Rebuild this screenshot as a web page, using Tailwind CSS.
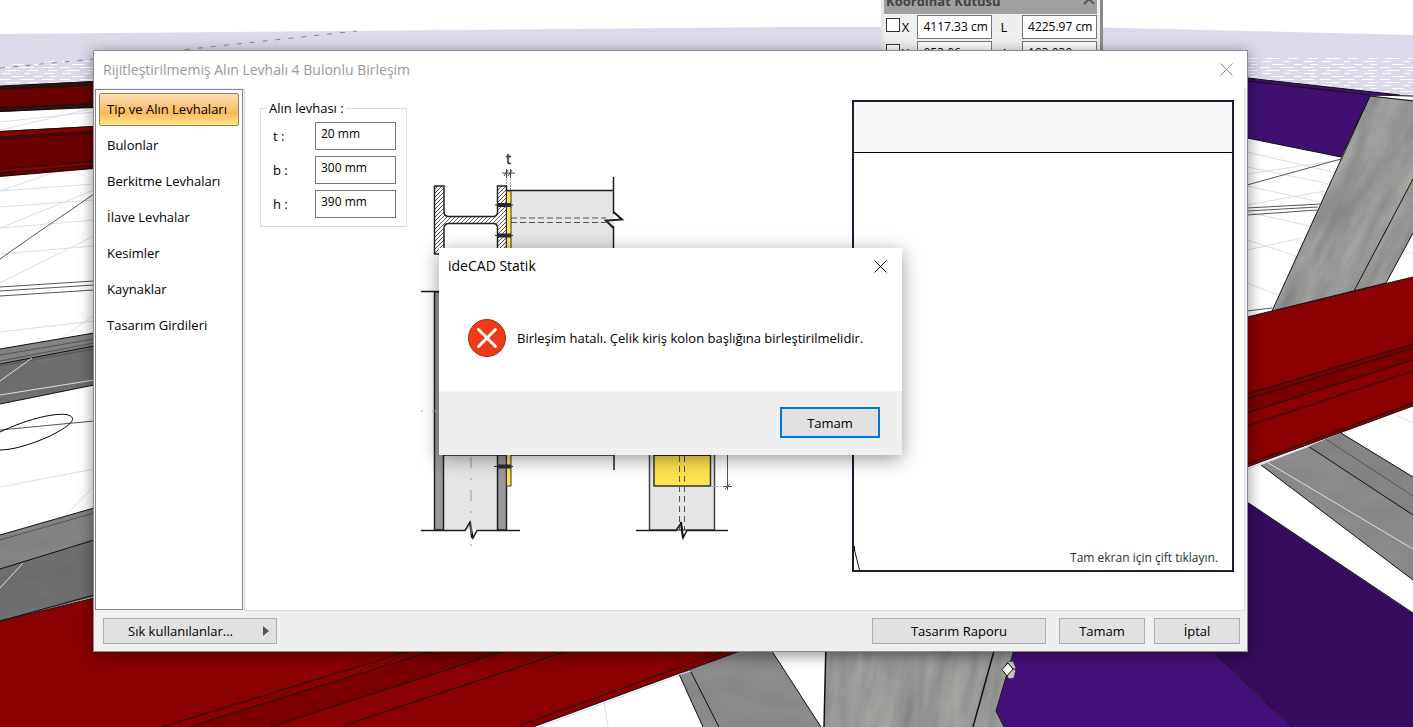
<!doctype html>
<html lang="tr">
  <head>
    <meta charset="UTF-8" />
    <meta name="viewport" content="width=device-width, initial-scale=1.0" />
    <title>ideCAD Statik</title>
    <script src="https://cdn.jsdelivr.net/npm/@tailwindcss/browser@4"></script>
  </head>
  <body
    class="relative h-screen overflow-hidden bg-white font-['Open_Sans','Noto_Sans',sans-serif] text-[13px] leading-4 text-black"
  >
    <!-- 3D viewport -->
    <svg
      class="absolute inset-0 h-full w-full"
      viewBox="0 0 1413 727"
      preserveAspectRatio="xMidYMid slice"
      aria-hidden="true"
    >
      <defs>
        <filter id="concrete" x="0" y="0" width="100%" height="100%" color-interpolation-filters="sRGB">
          <feTurbulence type="fractalNoise" baseFrequency="0.06 0.012" numOctaves="4" seed="8" />
          <feColorMatrix
            values="0.22 0 0 0 0.48  0.22 0 0 0 0.485  0.2 0 0 0 0.485  0 0 0 0 1"
          />
        </filter>
        <filter id="cement" x="0" y="0" width="100%" height="100%" color-interpolation-filters="sRGB">
          <feTurbulence type="fractalNoise" baseFrequency="0.02 0.06" numOctaves="3" seed="3" />
          <feColorMatrix
            values="0.05 0 0 0 0.49  0.05 0 0 0 0.49  0.05 0 0 0 0.49  0 0 0 0 1"
          />
        </filter>
        <pattern id="haze" width="60" height="12" patternUnits="userSpaceOnUse">
          <path
            d="M2 1.5h9M24 1.5h6M44 1.5h11M12 4.5h12M34 4.5h8M50 4.5h7M0 7.5h10M20 7.5h14M42 7.5h12M6 10.5h14M28 10.5h10M48 10.5h9"
            stroke="#fff"
          />
        </pattern>
        <clipPath id="columnTop">
          <path d="M1370 96L1413 100V233L1386 283L1272 311Z" />
        </clipPath>
        <clipPath id="columnBottom">
          <path d="M826 640H1017L1014 651L996 711L1004 727H824Z" />
        </clipPath>
        <clipPath id="cementParts">
          <path
            d="M0 349L94 333V385L0 404ZM0 535L94 508V597L0 621ZM1261 465L1341 433L1413 477V580ZM679 674L740 645H768L821 727H703Z"
          />
        </clipPath>
      </defs>

      <!-- ground and horizon -->
      <path d="M0 34L340 31L800 27H1080L1413 35V97L1247 80H94L0 86Z" fill="#dcdaea" />
      <path d="M0 64L94 59V82L0 86ZM1247 56L1413 58V97L1247 80Z" fill="url(#haze)" />
      <path d="M0 68L94 59M172 51L357 31" stroke="#888" stroke-dasharray="5 8" fill="none" />
      <g stroke="#dcdaea" fill="none">
        <path
          d="M0 191L94 184M0 207L94 200M0 228L94 190M0 191L55 172M0 228L94 220M0 254L94 246M0 283L94 236M0 332L94 321M62 338L94 315M0 487L94 469M65 516L94 486M0 122L94 112M0 130L94 108"
        />
        <path
          d="M1247 152L1341 174M1247 167L1330 184M1247 174L1341 160M1247 186L1320 202M1247 205L1325 191M1247 212L1310 226M1247 240L1296 256M1247 250L1302 238M1247 283L1278 295M1400 250L1413 254M1396 415L1413 423"
        />
        <path d="M540 727L691 671M604 702L608 727" />
      </g>
      <g stroke="#555" fill="none">
        <path d="M0 259L27 240L94 194M0 287L94 281M0 291L94 285M0 296L94 290M0 430L94 421" />
        <path
          d="M1247 185L1341 159M1247 208L1320 204M1247 211L1318 207M1247 215L1317 210M1247 311L1272 308"
        />
      </g>
      <path d="M0 432C25 420 52 413 66 414.500C78 417 74 424 50 436C30 445 12 450 0 450" stroke="#000" fill="none" />

      <!-- cement beams -->
      <g clip-path="url(#cementParts)">
        <rect width="1413" height="727" filter="url(#cement)" />
        <path d="M0 364L94 346V385L0 404ZM0 569L94 540V597L0 621Z" fill="#000" fill-opacity="0.16" />
        <path d="M1240 400L1413 515V600H1240ZM640 640H900V727H640Z" fill="#fff" fill-opacity="0.05" />
      </g>
      <g stroke="#111" fill="none">
        <path
          d="M0 349L94 333M0 364L94 346M0 404L94 385M0 535L94 508M0 569L94 540M0 621L94 595M1261 465L1413 580M1308 446L1413 515M1341 433L1413 477M679 674L703 727M690 670L719 727M768 645L821 727"
        />
        <path
          d="M0 355L94 339M0 361L94 343M0 366L94 349M0 540L94 513M1324 438L1413 496"
          stroke="#555"
        />
        <path
          d="M0 395L94 380M0 381L32 358M0 588L23 563M1265 461L1413 549M1247 469L1310 446M678 675L691 671"
          stroke="#dcdaea"
        />
      </g>

      <!-- steel beams -->
      <path d="M0 86L94 81V107L0 112Z" fill="#6b0000" />
      <path d="M0 131L94 126V169L0 177Z" fill="#6b0000" />
      <path d="M0 132L94 127V131L0 137ZM0 172L94 165V163L0 170Z" fill="#8b0000" />
      <path
        d="M0 86.500L94 82M0 89L94 85M0 108L94 104M0 111L94 107"
        stroke="#151515"
        stroke-width="2"
      />
      <path
        d="M0 131.500L94 126.500M0 137L94 131M0 139L94 133M0 169L94 161M0 173L94 165M0 176L94 168"
        stroke="#151515"
      />
      <path d="M0 621L94 598V640H770L533 727H0Z" fill="#8b0000" />
      <path d="M188 727L468 640H539L270 727Z" fill="#7a0000" />
      <path
        d="M0 621L94 598M162 727L445 640M188 727L468 640M270 727L539 640M340 727L600 640M516 727L755 640M533 727L770 640"
        stroke="#151515"
      />
      <path d="M1247 317L1413 277V406L1247 467Z" fill="#8b0000" />
      <path d="M1247 394L1413 344V360L1247 413Z" fill="#7a0000" />
      <path
        d="M1247 317L1413 277M1247 394L1413 344M1247 399L1413 348M1247 413L1413 360M1247 426L1413 371M1247 464L1413 403M1247 467L1413 406"
        stroke="#151515"
      />

      <!-- concrete columns -->
      <g clip-path="url(#columnTop)">
        <rect
          x="1200"
          y="0"
          width="300"
          height="420"
          filter="url(#concrete)"
          transform="rotate(27 1350 200)"
        />
      </g>
      <path
        d="M1370 96L1272 311M1413 179L1354 291M1413 233L1386 283M1370 96L1413 101M1370 95L1413 96M1272 311L1386 283"
        stroke="#111"
      />
      <g clip-path="url(#columnBottom)">
        <rect
          x="780"
          y="560"
          width="300"
          height="240"
          filter="url(#concrete)"
          transform="rotate(8 920 690)"
        />
      </g>
      <path d="M826 640L824 727M997 640L973 727" stroke="#111" stroke-width="1.500" />

      <!-- slabs -->
      <path d="M1247 78L1400 95L1370 96L1341 157L1247 138Z" fill="#3f1070" />
      <path d="M1247 78L1400 95M1247 81L1370 95M1247 138L1341 157L1370 96" stroke="#111" fill="none" />
      <path d="M1017 640L996 711L1004 727H1292L1201 640Z" fill="#43107a" />
      <path d="M1201 640H1247V502L1408 610L1413 613V727H1292Z" fill="#360c5e" />
      <path
        d="M1017 640L996 711L1004 727M1201 640L1292 727M1247 502L1413 613"
        stroke="#111"
        fill="none"
      />
      <path d="M1007 662L1013 661L1016 668L1014 678L1009 679L1004 671Z" fill="#c4c4c4" stroke="#111" stroke-width="0.500" />
      <path d="M1002 669.500L1008 663L1013 669L1007 676Z" fill="#fff" stroke="#111" />
      <path d="M1013 669H1016" stroke="#111" />
    </svg>

    <!-- coordinate box -->
    <section
      class="absolute -top-[9px] left-[881px] w-[222px] border-r-3 border-l-3 border-r-[#8a8a8a] border-l-[#e6e6e6] bg-[#efefef] pr-[3px]"
    >
      <header class="flex h-[23px] items-center justify-between bg-[#a0a0a0] px-[2px] pb-1 font-bold text-[#444]">
        <h2>Koordinat Kutusu</h2>
        <svg class="h-2 w-3" viewBox="0 0 12 8" aria-hidden="true">
          <path d="M1 7L6 2L11 7" fill="none" stroke="#555" stroke-width="2" />
        </svg>
      </header>
      <div class="flex flex-col gap-[2px] py-px">
        <div class="flex items-center">
          <input id="lockX" type="checkbox" class="mx-[2px] mb-1 h-[14px] w-[14px] appearance-none border border-[#333] bg-white" />
          <label for="lockX" class="w-4">X</label>
          <input aria-label="X" value="4117.33 cm" class="h-6 w-[75px] border border-[#777] bg-white pb-[2px] pl-[5px] text-[12px]" />
          <label for="coordL" class="w-[30px] pl-2">L</label>
          <input id="coordL" value="4225.97 cm" class="h-6 w-[75px] border border-[#777] bg-white pb-[2px] pl-[5px] text-[12px]" />
        </div>
        <div class="flex items-center">
          <input id="lockY" type="checkbox" class="mx-[2px] mb-1 h-[14px] w-[14px] appearance-none border border-[#333] bg-white" />
          <label for="lockY" class="w-4">Y</label>
          <input aria-label="Y" value="953.06 cm" class="h-6 w-[75px] border border-[#777] bg-white pb-[2px] pl-[5px] text-[12px]" />
          <label for="coordA" class="w-[30px] pl-2">A</label>
          <input id="coordA" value="193.039" class="h-6 w-[75px] border border-[#777] bg-white pb-[2px] pl-[5px] text-[12px]" />
        </div>
      </div>
    </section>

    <!-- connection dialog -->
    <main
      class="absolute top-[50px] right-[165px] bottom-[75px] left-[93px] flex flex-col border border-[#8a8a90] bg-[#efefef] shadow-[0_3px_14px_rgba(0,0,0,0.45)]"
    >
      <header class="flex h-[37px] shrink-0 items-center justify-between bg-white pr-[14px] pl-[9px]">
        <h1 class="text-[14px] text-[#999]">Rijitleştirilmemiş Alın Levhalı 4 Bulonlu Birleşim</h1>
        <button type="button" aria-label="Kapat">
          <svg class="h-[13px] w-[13px]" viewBox="0 0 13 13">
            <path d="M0.500 0.500L12.500 12.500M12.500 0.500L0.500 12.500" stroke="#888" />
          </svg>
        </button>
      </header>

      <div class="flex min-h-0 flex-1">
        <nav class="mt-px mr-px mb-px ml-px flex w-[148px] shrink-0 flex-col gap-[3px] border border-[#828790] bg-white p-[3px]">
          <button
            type="button"
            class="h-[33px] rounded-[2px] border border-[#a08050] bg-linear-to-b from-[#fcdcb4] via-[#fbb95c] via-60% to-[#ffe48c] pb-px pl-[7px] text-left"
          >
            Tip ve Alın Levhaları
          </button>
          <button type="button" class="h-[33px] pb-px pl-2 text-left">Bulonlar</button>
          <button type="button" class="h-[33px] pb-px pl-2 text-left">Berkitme Levhaları</button>
          <button type="button" class="h-[33px] pb-px pl-2 text-left">İlave Levhalar</button>
          <button type="button" class="h-[33px] pb-px pl-2 text-left">Kesimler</button>
          <button type="button" class="h-[33px] pb-px pl-2 text-left">Kaynaklar</button>
          <button type="button" class="h-[33px] pb-px pl-2 text-left">Tasarım Girdileri</button>
        </nav>

        <div class="mr-[2px] flex flex-1 items-start border-r border-b border-l border-[#dcdcdc] bg-white pt-3 pr-[10px] pb-[38px] pl-[15px]">
          <fieldset class="w-[147px] border border-[#dcdcdc] px-[10px] pb-2">
            <legend class="-ml-1 px-[2px]">Alın levhası :</legend>
            <div class="mt-[6px] flex flex-col gap-[6px]">
              <div class="flex items-center justify-between">
                <label for="plateT" class="pl-[2px]">t :</label>
                <input id="plateT" value="20 mm" class="h-7 w-[81px] border border-[#777] pb-[6px] pl-[5px] text-[12px]" />
              </div>
              <div class="flex items-center justify-between">
                <label for="plateB" class="pl-[2px]">b :</label>
                <input id="plateB" value="300 mm" class="h-7 w-[81px] border border-[#777] pb-[6px] pl-[5px] text-[12px]" />
              </div>
              <div class="flex items-center justify-between">
                <label for="plateH" class="pl-[2px]">h :</label>
                <input id="plateH" value="390 mm" class="h-7 w-[81px] border border-[#777] pb-[6px] pl-[5px] text-[12px]" />
              </div>
            </div>
          </fieldset>

          <!-- end plate drawing -->
          <svg class="mt-12 ml-[13px] w-80 shrink-0" viewBox="420 148 320 405" aria-hidden="true">
            <defs>
              <pattern id="hatch" width="4" height="4" patternUnits="userSpaceOnUse">
                <path d="M-1 1L1 -1M0 4L4 0M3 5L5 3" stroke="#333" stroke-width="0.800" />
              </pattern>
            </defs>
            <text x="506" y="164" font-size="14" fill="#222" stroke="#222" stroke-width="0.400">t</text>
            <path d="M502 173H515M504 176L508 170M508 176L512 170M506.500 169V178M510.500 169V178" stroke="#444" />
            <path d="M506.500 179V186M510.500 179V190" stroke="#aaa" stroke-dasharray="2 1" />
            <!-- plan -->
            <path d="M510 190.500H614V300H510Z" fill="#e5e5e5" />
            <path d="M506 190.500H614M613.500 177V214M613.500 226V300" fill="none" stroke="#1c1c1c" stroke-width="1.500" />
            <path d="M613.500 212L622 219.500L606 220.500L613.500 228" fill="none" stroke="#1c1c1c" stroke-width="2" />
            <path d="M511 218H606M511 222.500H606" stroke="#555" stroke-dasharray="6 3" />
            <path
              d="M434.500 186H444V212Q444 216.500 449 216.500H493Q497.500 216.500 497.500 212V186H506.500V254H497.500V228Q497.500 223.500 493 223.500H449Q444 223.500 444 228V254H434.500Z"
              fill="url(#hatch)"
              stroke="#222"
              stroke-width="1.500"
            />
            <path d="M506.500 191H511V254H506.500Z" fill="#ffe44d" stroke="#333" />
            <path d="M498 205H511M498 235.500H511" stroke="#2a2a2a" stroke-width="4" />
            <path d="M495 205H513M495 235.500H513" stroke="#2a2a2a" />
            <!-- elevation -->
            <path d="M444 455H498V530H444Z" fill="#e5e5e5" />
            <path d="M434.500 292H443.500V530H434.500ZM497.500 440H506.500V530H497.500Z" fill="#999" stroke="#222" stroke-width="1.500" />
            <path d="M421 291.500H500M443 455H614V470M421 530.500H465L470 522L473 538L477 530.500H520" fill="none" stroke="#1c1c1c" stroke-width="1.500" />
            <path d="M470 522L472 538" stroke="#111" stroke-width="2" />
            <path d="M471 457V552" stroke="#999" stroke-dasharray="11 10 2 10" />
            <path d="M421 411H440" stroke="#aaa" stroke-dasharray="2 9 8" />
            <path d="M506.500 440H511V486H506.500Z" fill="#ffe44d" stroke="#333" />
            <path d="M497 466.500H511" stroke="#2a2a2a" stroke-width="4" />
            <path d="M494 466.500H513" stroke="#2a2a2a" />
            <!-- section -->
            <path d="M649.500 440H714.500V530H649.500Z" fill="#e5e5e5" stroke="#444" stroke-width="1.500" />
            <path d="M654 440H710.500V486H654Z" fill="#ffe44d" stroke="#333" stroke-width="1.500" />
            <path d="M654 455H710" stroke="#222" stroke-width="2" />
            <path d="M679.500 456V530M684.500 456V530" stroke="#555" stroke-dasharray="6 4" />
            <path d="M636 530.500H676L681 523L683 538L687 530.500H728" fill="none" stroke="#1c1c1c" stroke-width="1.500" />
            <path d="M681 522L683 538" stroke="#111" stroke-width="2" />
            <path d="M727.500 440V490M723 486.500H732M725 489L730 484" stroke="#555" />
            <path d="M712 486.500H722" stroke="#aaa" stroke-dasharray="6 2" />
          </svg>

          <div class="ml-28 flex flex-1 flex-col self-stretch border-2 border-[#1c1c38] bg-white">
            <div class="h-[51px] border-b border-black bg-[#f6f6f6]"></div>
            <div class="flex flex-1 items-end justify-between">
              <svg class="h-6 w-[6px]" viewBox="0 0 6 24" aria-hidden="true">
                <path d="M0.500 0V4L5.500 24" fill="none" stroke="#111" />
              </svg>
              <p class="pr-[14px] pb-1 text-[12px] text-[#233]">Tam ekran için çift tıklayın.</p>
            </div>
          </div>
        </div>
      </div>

      <footer class="flex h-10 shrink-0 items-center pr-[7px] pl-[9px]">
        <button type="button" class="mr-auto flex h-[26px] w-[174px] items-center justify-between border border-[#adadad] bg-[#e1e1e1] pr-[7px] pl-6">
          <span>Sık kullanılanlar...</span>
          <svg class="h-[10px] w-[6px]" viewBox="0 0 6 10" aria-hidden="true">
            <path d="M0 0L6 5L0 10Z" fill="#555" />
          </svg>
        </button>
        <button type="button" class="mr-[13px] h-[26px] w-[174px] border border-[#adadad] bg-[#e1e1e1]">Tasarım Raporu</button>
        <button type="button" class="mr-[9px] h-[26px] w-[86px] border border-[#adadad] bg-[#e1e1e1]">Tamam</button>
        <button type="button" class="h-[26px] w-[86px] border border-[#adadad] bg-[#e1e1e1]">İptal</button>
      </footer>
    </main>

    <!-- error message -->
    <div
      role="alertdialog"
      aria-labelledby="msgTitle"
      class="absolute top-[248px] left-[439px] w-[463px] bg-white shadow-[0_4px_18px_rgba(0,0,0,0.4)]"
    >
      <header class="flex h-9 items-center justify-between pr-[15px] pl-[9px]">
        <h2 id="msgTitle" class="text-[14px]">ideCAD Statik</h2>
        <button type="button" aria-label="Kapat">
          <svg class="h-[13px] w-[13px]" viewBox="0 0 13 13">
            <path d="M0.500 0.500L12.500 12.500M12.500 0.500L0.500 12.500" stroke="#000" />
          </svg>
        </button>
      </header>
      <div class="flex h-[107px] items-center gap-[11px] pl-[29px]">
        <svg class="h-[38px] w-[38px]" viewBox="0 0 38 38" aria-hidden="true">
          <circle cx="19" cy="19" r="18.500" fill="#f03a17" stroke="#a82a12" />
          <path d="M10.500 10.500L27.500 27.500M27.500 10.500L10.500 27.500" stroke="#fff" stroke-width="3" stroke-linecap="round" />
        </svg>
        <p>Birleşim hatalı. Çelik kiriş kolon başlığına birleştirilmelidir.</p>
      </div>
      <footer class="flex h-16 items-center justify-end bg-[#efefef] pr-[22px] pb-px">
        <button type="button" class="h-[31px] w-[100px] border-2 border-[#0078d7] bg-[#e1e1e1]">Tamam</button>
      </footer>
    </div>
  </body>
</html>
